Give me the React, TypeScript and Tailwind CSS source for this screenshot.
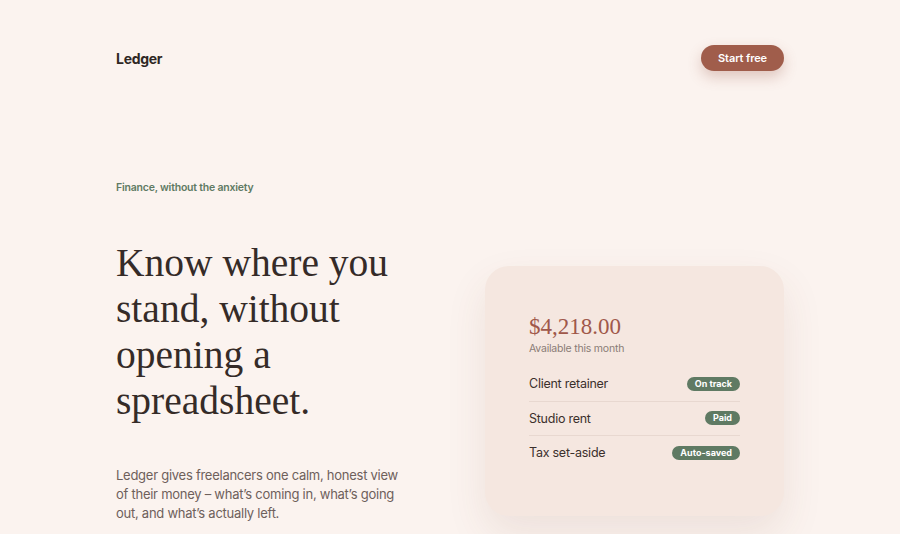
import React from 'react'

const sans = "font-['Inter','Liberation_Sans',sans-serif]"
const serif = "font-['Liberation_Serif','DejaVu_Serif',serif]"

const rows = [
  { label: 'Client retainer', badge: 'On track' },
  { label: 'Studio rent', badge: 'Paid' },
  { label: 'Tax set-aside', badge: 'Auto-saved' },
]

const BalanceCard: React.FC = () => (
  <div className="w-[299px] rounded-[24px] bg-[#f5e7e0] px-[44px] pt-[46px] pb-[46px] shadow-[0_18px_40px_rgba(120,70,50,0.10)]">
    <p className={`${serif} text-[23px] leading-[30px] text-[#a0584a]`}>$4,218.00</p>
    <p className="text-[10.5px] leading-[14px] tracking-[-0.02em] text-[#8a7c76]">Available this month</p>
    <div className="mt-[11px]">
      {rows.map((row, i) => (
        <div
          key={row.label}
          className={`flex items-center justify-between py-[8px] ${i < rows.length - 1 ? 'border-b border-[#e8d8d0]' : ''}`}
        >
          <span className="text-[12.5px] leading-[17.5px] tracking-[-0.02em] text-[#3b302c]">{row.label}</span>
          <span className="rounded-full bg-[#5f7a63] px-[8px] text-[9px] font-bold leading-[14px] text-white">
            {row.badge}
          </span>
        </div>
      ))}
    </div>
  </div>
)

const App: React.FC = () => {
  return (
    <div className={`${sans} h-[534px] overflow-hidden bg-[#fbf3ef] text-[#3b302c]`}>
      <div className="mx-auto w-[668px]">
        {/* Header */}
        <header className="flex items-center justify-between pt-[45px]">
          <span className="text-[14px] font-bold tracking-[-0.02em] text-[#2f2724]">Ledger</span>
          <button className="h-[26px] rounded-full bg-[#a05d4b] px-[17px] text-[11px] font-semibold tracking-[-0.01em] text-white shadow-[0_6px_14px_rgba(160,93,75,0.30)]">
            Start free
          </button>
        </header>

        {/* Hero */}
        <section className="flex items-start justify-between pt-[110px]">
          <div className="w-[300px]">
            <p className="text-[10.5px] font-semibold leading-[14px] tracking-[-0.02em] text-[#5f7a63]">
              Finance, without the anxiety
            </p>
            <h1 className={`${serif} mt-[45px] w-[300px] text-[39.5px] leading-[46px] text-[#352b28]`}>
              Know where you stand, without opening a spreadsheet.
            </h1>
            <p className="mt-[42px] w-[290px] text-[13px] leading-[19px] tracking-[-0.02em] text-[#6e605b]">
              Ledger gives freelancers one calm, honest view of their money – what’s coming in, what’s going out, and what’s actually left.
            </p>
          </div>
          <div className="mt-[85px]">
            <BalanceCard />
          </div>
        </section>
      </div>
    </div>
  )
}

export default App
